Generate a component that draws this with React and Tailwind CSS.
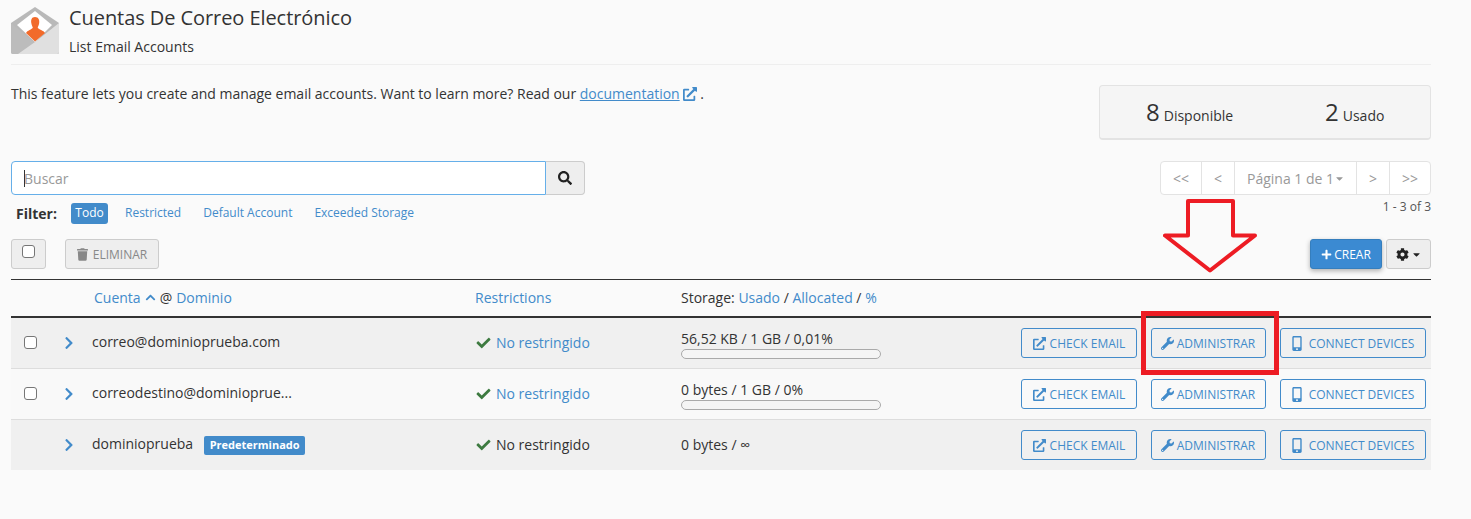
import React from "react";
import { FaExternalLinkAlt, FaWrench, FaMobileAlt, FaCheck, FaChevronRight, FaChevronUp, FaSearch, FaTrash, FaPlus, FaCog, FaCaretDown } from "react-icons/fa";

function Check({ cls = "" }) {
  return <span className={"block w-[13px] h-[13px] rounded-[3px] border border-[#767676] bg-white " + cls}></span>;
}

function Action({ icon, label, w }) {
  return (
    <span className={"flex items-center justify-center h-[30px] border border-[#428bca] rounded-[3px] text-[#428bca] text-[12px] " + w}>
      {icon}
      <span className="pt-[2px]">{label}</span>
    </span>
  );
}

function Row({ check, name, badge, link, storage, bar, bg, border, h }) {
  return (
    <div className={"flex items-center pr-[5px] " + h + " " + bg + " " + border}>
      <div className="w-[39px] pl-[13px] pb-[1px] shrink-0">{check && <Check />}</div>
      <div className="w-[42px] shrink-0 pl-[13px] text-[#428bca]"><FaChevronRight className="w-[12px] h-[14px]" /></div>
      <div className="w-[384px] shrink-0 flex items-center text-[14px] text-[#333] pb-[3px]">
        <span>{name}</span>
        {badge && <span className="ml-[11px] h-[19px] w-[101px] mt-[3px] flex items-center justify-center rounded-[2px] bg-[#428bca] text-white text-[11px] font-bold">{badge}</span>}
      </div>
      <div className="w-[205px] shrink-0 flex items-center gap-[5px] text-[14px] pb-[1px]">
        <FaCheck className="w-[15px] h-[14px] text-[#3d7a40]" />
        <span className={link ? "text-[#428bca]" : "text-[#333]"}>No restringido</span>
      </div>
      <div className="w-[340px] shrink-0 text-[14px] text-[#333] pb-[1px]">
        <div className="leading-[20px]">{storage}</div>
        {bar && <div className="w-[200px] h-[10px] rounded-[5px] border border-[#aaa] bg-[#f5f5f5] mb-[-2px]"></div>}
      </div>
      <div className="flex items-center gap-[14px] ml-auto">
        <Action w="w-[116px] gap-[4px]" label="CHECK EMAIL" icon={<FaExternalLinkAlt className="w-[13px] h-[13px]" />} />
        <Action w="w-[115px] gap-[3px] pr-[1px]" label="ADMINISTRAR" icon={<FaWrench className="w-[13px] h-[13px]" />} />
        <Action w="w-[146px] gap-[7px]" label="CONNECT DEVICES" icon={<FaMobileAlt className="w-[10px] h-[15px]" />} />
      </div>
    </div>
  );
}

export default function App() {
  return (
    <div className="relative w-[1471px] h-[519px] overflow-hidden bg-[#fafafa] text-[#333] font-['Open_Sans',sans-serif] text-[14px]">
      <div className="w-[1420px] ml-[11px]">
        <div className="flex h-[65px] border-b border-[#eeeeee] pt-[7px]">
          <svg width="48" height="47" viewBox="0 0 48 47" className="shrink-0">
            <path d="M0 16 L24 0 L48 16 L48 45 Q48 47 46 47 L2 47 Q0 47 0 45 Z" fill="#b9b9b9" />
            <path d="M6 18 L24 4 L41 18 L24 35 Z" fill="#ffffff" />
            <path d="M0 16 L24 36 L48 16 L48 45 Q48 47 46 47 L2 47 Q0 47 0 45 Z" fill="#bcbcbc" />
            <path d="M48 16 L48 45 Q48 47 46 47 L7 47 L24 35 Z" fill="#e0e0e0" />
            <path d="M24 10 C27.5 10 28.7 13 28.2 16 C27.9 18 27 19.5 26.7 20.5 C27.2 22.5 33 23.5 34 26 L24 34.5 L15 26 C16 23.5 21.3 22.5 21.8 20.5 C21.5 19.5 20.6 18 20.3 16 C19.8 13 20.5 10 24 10 Z" fill="#f26b2b" />
          </svg>
          <div className="ml-[10px]">
            <div className="text-[20px] leading-[24px] text-[#333] -mt-[1px] tracking-[-0.07px]">Cuentas De Correo Electrónico</div>
            <div className="text-[14px] leading-[18px] mt-[8px] text-[#333]">List Email Accounts</div>
          </div>
        </div>

        <div className="flex justify-between mt-[20px]">
          <div className="leading-[20px] text-[14px] -mt-[1px] tracking-[-0.01px]">
            This feature lets you create and manage email accounts. Want to learn more? Read our{" "}
            <span className="text-[#428bca] underline">documentation</span>
            <FaExternalLinkAlt className="inline w-[14px] h-[14px] ml-[3px] mb-[2px] text-[#428bca]" />{" "}.
          </div>
          <div className="flex w-[332px] h-[55px] bg-[#f5f5f5] border border-[#e3e3e3] border-b-2 rounded-[4px] items-center">
            <div className="w-[166px] pl-[46px] flex items-baseline gap-[4px] text-[14px]"><span className="text-[24px] leading-[30px]">8</span>Disponible</div>
            <div className="pl-[59px] flex items-baseline gap-[4px] text-[14px]"><span className="text-[24px] leading-[30px]">2</span>Usado</div>
          </div>
        </div>

        <div className="flex justify-between mt-[21px]">
          <div>
            <div className="flex w-[574px] h-[34px]">
              <div className="flex-1 flex items-center bg-white border border-[#66afe9] rounded-l-[4px] pl-[12px] text-[14px] text-[#999]">
                <span className="w-px h-[17px] bg-[#333] -mr-[1px]"></span>Buscar
              </div>
              <div className="w-[39px] flex items-center justify-center bg-[#eeeeee] border border-l-0 border-[#cccccc] rounded-r-[4px]">
                <FaSearch className="w-[14px] h-[14px] text-[#222]" />
              </div>
            </div>
            <div className="flex items-center h-[22px] mt-[7px] pl-[5px] text-[12px]">
              <span className="font-bold text-[#333] text-[14px] w-[55px]">Filter:</span>
              <span className="bg-[#428bca] text-white rounded-[3px] h-[21px] w-[37px] flex items-center justify-center">Todo</span>
              <span className="text-[#428bca] ml-[17px]">Restricted</span>
              <span className="text-[#428bca] ml-[22px]">Default Account</span>
              <span className="text-[#428bca] ml-[22px]">Exceeded Storage</span>
            </div>
          </div>
          <div className="flex flex-col items-end">
            <div className="flex h-[34px] w-[271px] bg-white border border-[#e3e3e3] rounded-[4px] text-[14px] text-[#999] divide-x divide-[#e3e3e3]">
              <span className="w-[41px] flex items-center justify-center">&lt;&lt;</span>
              <span className="w-[33px] flex items-center justify-center">&lt;</span>
              <span className="w-[122px] flex items-center justify-center gap-[1px]">Página 1 de 1<FaCaretDown className="w-[9px] h-[11px]" /></span>
              <span className="w-[33px] flex items-center justify-center">&gt;</span>
              <span className="flex-1 flex items-center justify-center">&gt;&gt;</span>
            </div>
            <div className="text-[12px] leading-[16px] mt-[4px] text-[#555]">1 - 3 of 3</div>
          </div>
        </div>

        <div className="flex justify-between mt-[15px] h-[30px]">
          <div className="flex gap-[19px]">
            <div className="w-[35px] h-[30px] flex justify-center pt-[5px] bg-[#eeeeee] border border-[#cccccc] rounded-[3px]"><Check /></div>
            <div className="w-[94px] h-[30px] flex items-center justify-center gap-[5px] bg-[#eeeeee] border border-[#cccccc] rounded-[3px] text-[12px] text-[#888]">
              <FaTrash className="w-[11px] h-[13px]" /><span className="pt-[1px]">ELIMINAR</span>
            </div>
          </div>
          <div className="flex gap-[4px]">
            <div className="w-[72px] h-[30px] flex items-center justify-center gap-[2px] bg-[#3b8ad2] border border-[#357ebd] rounded-[3px] text-white text-[12px] shadow-[0_2px_5px_rgba(0,0,0,0.3)]">
              <FaPlus className="w-[11px] h-[11px]" /><span className="pt-[1px]">CREAR</span>
            </div>
            <div className="w-[45px] h-[30px] flex items-center justify-center gap-[3px] bg-[#eeeeee] border border-[#cccccc] rounded-[3px] text-[#222]">
              <FaCog className="w-[13px] h-[13px]" /><FaCaretDown className="w-[9px] h-[11px]" />
            </div>
          </div>
        </div>

        <div className="mt-[10px] border-t border-[#333]">
          <div className="flex items-center h-[38px] pb-[1px] border-b-2 border-[#333] text-[14px]">
            <div className="w-[83px] shrink-0"></div>
            <div className="w-[381px] shrink-0 flex items-center">
              <span className="text-[#428bca]">Cuenta</span>
              <FaChevronUp className="w-[15px] h-[11px] mx-[2px] text-[#428bca]" />
              <span>@</span>
              <span className="text-[#428bca] ml-[4px]">Dominio</span>
            </div>
            <div className="w-[206px] shrink-0 text-[#428bca]">Restrictions</div>
            <div>Storage: <span className="text-[#428bca]">Usado</span> / <span className="text-[#428bca]">Allocated</span> / <span className="text-[#428bca]">%</span></div>
          </div>
          <Row check name="correo@dominioprueba.com" link storage="56,52 KB / 1 GB / 0,01%" bar bg="bg-[#f0f0f0]" border="border-b border-[#dddddd]" h="h-[51px]" />
          <Row check name="correodestino@dominioprue..." link storage="0 bytes / 1 GB / 0%" bar bg="bg-[#f9f9f9]" border="border-b border-[#dddddd]" h="h-[51px]" />
          <Row name="dominioprueba" badge="Predeterminado" storage="0 bytes / ∞" bg="bg-[#f0f0f0]" border="" h="h-[50px]" />
        </div>
      </div>

      <div className="absolute left-[1141px] top-[311px] w-[138px] h-[64px] border-[5px] border-[#ed1c24]"></div>
      <svg className="absolute left-[1163px] top-[198px]" width="95" height="76" viewBox="0 0 95 76">
        <path d="M25 3 L70 3 L70 37.5 L92 37.5 L47 72.5 L2 37.5 L25 37.5 Z" fill="none" stroke="#ed1c24" strokeWidth="4" strokeLinejoin="round" />
      </svg>
    </div>
  );
}
